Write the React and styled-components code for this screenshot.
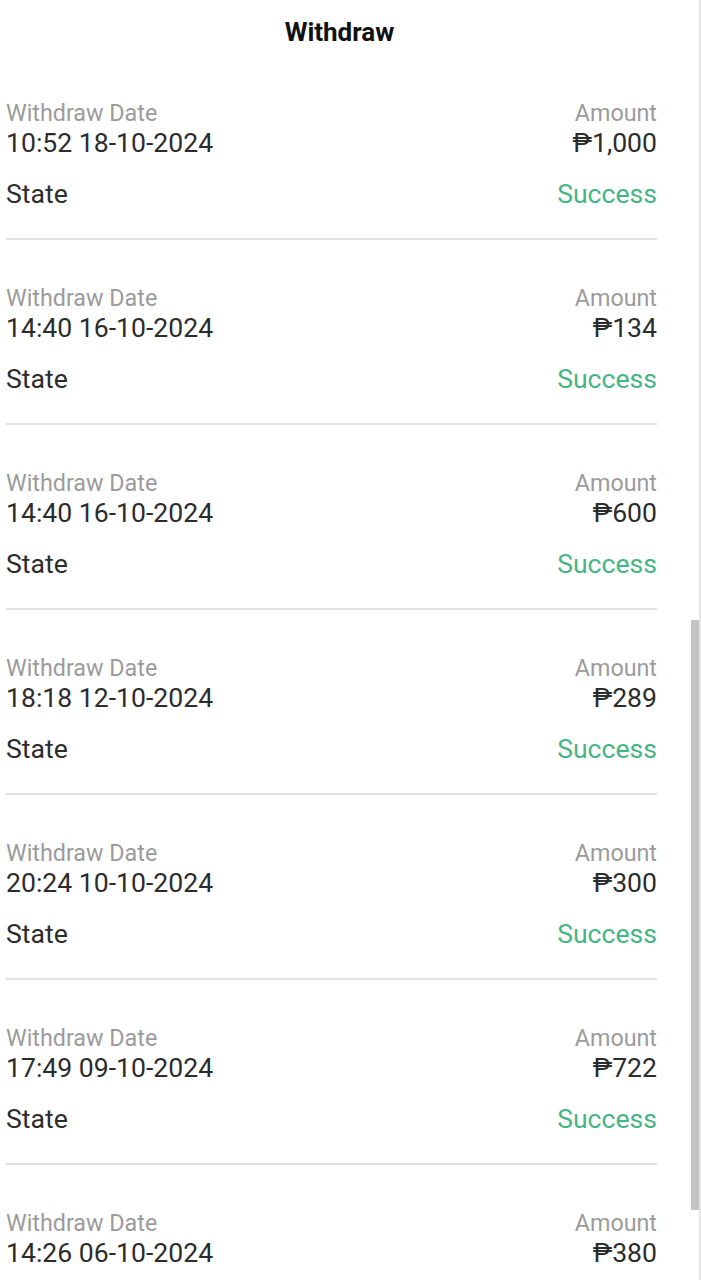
import React from 'react'
import styled, { createGlobalStyle } from 'styled-components'

const GlobalStyle = createGlobalStyle`
    html, body {
        margin: 0;
        padding: 0;
        background: #ffffff;
        overflow: hidden;
    }
    * {
        box-sizing: border-box;
    }
`

const Page = styled.div`
    position: relative;
    width: 701px;
    height: 1280px;
    overflow: hidden;
    background: #fff;
    font-family: Roboto, "Noto Sans", "DejaVu Sans", sans-serif;
    border-right: 2px solid #e6e6e6;
`

const Header = styled.div`
    padding: 17px 20px 8px 0;
    line-height: 30px;
    text-align: center;
    font-size: 26px;
    font-weight: 700;
    color: #111;
`

const List = styled.ul`
    list-style: none;
    margin: 0 42px 0 6px;
    padding: 0;
`

const Item = styled.li`
    display: flex;
    flex-direction: column;
    padding: 43px 0 29px;
    border-bottom: 2px solid #e2e2e2;
`

const Row = styled.div`
    display: flex;
    justify-content: space-between;
    align-items: center;
    margin-top: ${props => props.gap || 0}px;
`

const Label = styled.span`
    font-size: 23.3px;
    line-height: 30px;
    color: #9b9b9b;
`

const Value = styled.span`
    font-size: 26.6px;
    line-height: 30px;
    color: ${props => props.success ? '#46b584' : '#2c2c2c'};
`

const ScrollThumb = styled.div`
    position: absolute;
    right: 0;
    top: 620px;
    width: 8px;
    height: 590px;
    background: #c4c4c4;
`

const records = [
    { date: '10:52 18-10-2024', amount: '₱1,000' },
    { date: '14:40 16-10-2024', amount: '₱134' },
    { date: '14:40 16-10-2024', amount: '₱600' },
    { date: '18:18 12-10-2024', amount: '₱289' },
    { date: '20:24 10-10-2024', amount: '₱300' },
    { date: '17:49 09-10-2024', amount: '₱722' },
    { date: '14:26 06-10-2024', amount: '₱380' },
]

const WithdrawItem = ({ date, amount }) => (
    <Item>
        <Row>
            <Label>Withdraw Date</Label>
            <Label>Amount</Label>
        </Row>
        <Row>
            <Value>{date}</Value>
            <Value>{amount}</Value>
        </Row>
        <Row gap={21}>
            <Value>State</Value>
            <Value success>Success</Value>
        </Row>
    </Item>
)

export default function App() {
    return (
        <Page>
            <GlobalStyle />
            <Header>Withdraw</Header>
            <List>
                {records.map((r, i) => (
                    <WithdrawItem key={i} date={r.date} amount={r.amount} />
                ))}
            </List>
            <ScrollThumb />
        </Page>
    )
}
